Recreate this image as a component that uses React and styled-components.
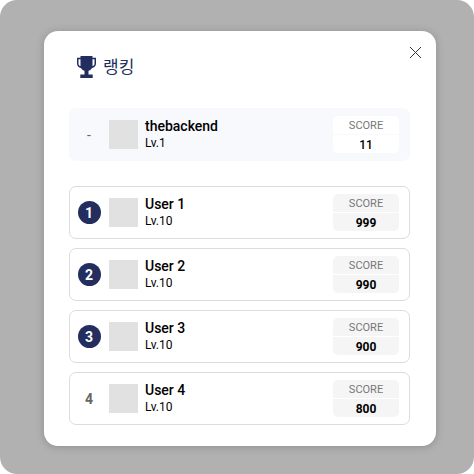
import React from "react";
import styled, { createGlobalStyle } from "styled-components";

const me = { rank: "-", name: "thebackend", level: 1, score: 11 };

const users = [
  { rank: 1, name: "User 1", level: 10, score: 999 },
  { rank: 2, name: "User 2", level: 10, score: 990 },
  { rank: 3, name: "User 3", level: 10, score: 900 },
  { rank: 4, name: "User 4", level: 10, score: 800 },
];

const GlobalStyle = createGlobalStyle`
  * {
    box-sizing: border-box;
  }
  body {
    margin: 0;
    background: #ffffff;
    font-family: Roboto, "Noto Sans CJK KR", sans-serif;
    color: #000000;
  }
`;

const Backdrop = styled.div`
  min-height: 100vh;
  padding: 31px 38px 28px 44px;
  background: #b1b1b1;
  border-radius: 17px;
`;

const Modal = styled.section`
  position: relative;
  padding: 23px 26px 21px 25px;
  background: #ffffff;
  border-radius: 14px;
  box-shadow: 0 1px 8px rgba(0, 0, 0, 0.2);
`;

const CloseButton = styled.button`
  position: absolute;
  top: 13px;
  right: 12px;
  width: 17px;
  height: 17px;
  padding: 3px;
  border: none;
  background: none;
  cursor: pointer;
  svg {
    display: block;
  }
`;

const Header = styled.header`
  display: flex;
  align-items: center;
  gap: 7px;
  height: 26px;
  margin-bottom: 28px;
  padding-left: 8px;
  color: #232e5e;
`;

const Title = styled.h1`
  margin: 0;
  font-size: 17px;
  line-height: 26px;
  font-weight: 400;
`;

const List = styled.ol`
  display: flex;
  flex-direction: column;
  gap: 9px;
  margin: 25px 0 0;
  padding: 0;
  list-style: none;
`;

const Row = styled.div`
  display: flex;
  align-items: center;
  height: 53px;
  padding: 0 10px 0 8px;
  border: 1px solid ${(props) => (props.$mine ? "#f8f9fd" : "#dcdcdc")};
  border-radius: 7px;
  background: ${(props) => (props.$mine ? "#f8f9fd" : "#ffffff")};
`;

const Rank = styled.span`
  width: 23px;
  height: 23px;
  padding-right: 1px;
  border-radius: 50%;
  font-size: 14px;
  line-height: 24px;
  font-weight: ${(props) => (props.$plain ? 400 : 700)};
  text-align: center;
  color: ${(props) => (props.$top ? "#ffffff" : "#666666")};
  background: ${(props) => (props.$top ? "#232e5e" : "transparent")};
`;

const Avatar = styled.div`
  width: 29px;
  height: 29px;
  margin: 0 7px 0 8px;
  background: #e1e1e1;
`;

const Info = styled.div`
  flex: 1;
  min-width: 0;
  padding-bottom: 1px;
`;

const Name = styled.div`
  font-size: 14px;
  line-height: 18px;
  font-weight: 500;
`;

const Level = styled.div`
  font-size: 12px;
  line-height: 17px;
`;

const ScoreBox = styled.div`
  display: grid;
  gap: 1px;
  width: 66px;
  border-radius: 5px;
  overflow: hidden;
  text-align: center;
  font-size: 12px;
  line-height: 16px;
  background: ${(props) => (props.$mine ? "#f8f9fd" : "#ffffff")};
  span {
    padding-top: 2px;
    background: ${(props) => (props.$mine ? "#ffffff" : "#f5f5f5")};
  }
`;

const ScoreLabel = styled.span`
  font-size: 11px;
  color: #777777;
`;

const ScoreValue = styled.span`
  font-weight: ${(props) => (props.$mine ? 500 : 700)};
`;

const TrophyIcon = () => (
  <svg width="19" height="22" viewBox="0 0 19 22" aria-hidden="true">
    <path
      fill="currentColor"
      fillRule="evenodd"
      d="M3.500 0h12v1.800H19V7.500c0 2.400-1.600 4.200-4.200 4.700-.9 1.300-2 2.200-3.300 2.600V18.500h4.200V22H3.300v-3.500h4.200v-3.700c-1.300-.4-2.400-1.300-3.300-2.600C1.600 11.700 0 9.900 0 7.500V1.800h3.500zM1.500 3.300v4.200c0 1.300.7 2.300 2 2.800V3.300zM15.500 3.300v7c1.300-.5 2-1.500 2-2.800V3.300z"
    />
  </svg>
);

const RankingRow = ({ user, mine, as }) => (
  <Row as={as} $mine={mine}>
    <Rank $top={user.rank <= 3} $plain={mine}>
      {user.rank}
    </Rank>
    <Avatar />
    <Info>
      <Name>{user.name}</Name>
      <Level>Lv.{user.level}</Level>
    </Info>
    <ScoreBox $mine={mine}>
      <ScoreLabel>SCORE</ScoreLabel>
      <ScoreValue $mine={mine}>{user.score}</ScoreValue>
    </ScoreBox>
  </Row>
);

const App = () => (
  <>
    <GlobalStyle />
    <Backdrop>
      <Modal role="dialog" aria-labelledby="ranking-title">
        <CloseButton type="button" aria-label="닫기">
          <svg width="11" height="11" viewBox="0 0 11 11" aria-hidden="true">
            <path d="M0 0L11 11M11 0L0 11" stroke="#333344" fill="none" />
          </svg>
        </CloseButton>
        <Header>
          <TrophyIcon />
          <Title id="ranking-title">랭킹</Title>
        </Header>
        <RankingRow user={me} mine />
        <List>
          {users.map((user) => (
            <RankingRow key={user.rank} user={user} as="li" />
          ))}
        </List>
      </Modal>
    </Backdrop>
  </>
);

export default App;
